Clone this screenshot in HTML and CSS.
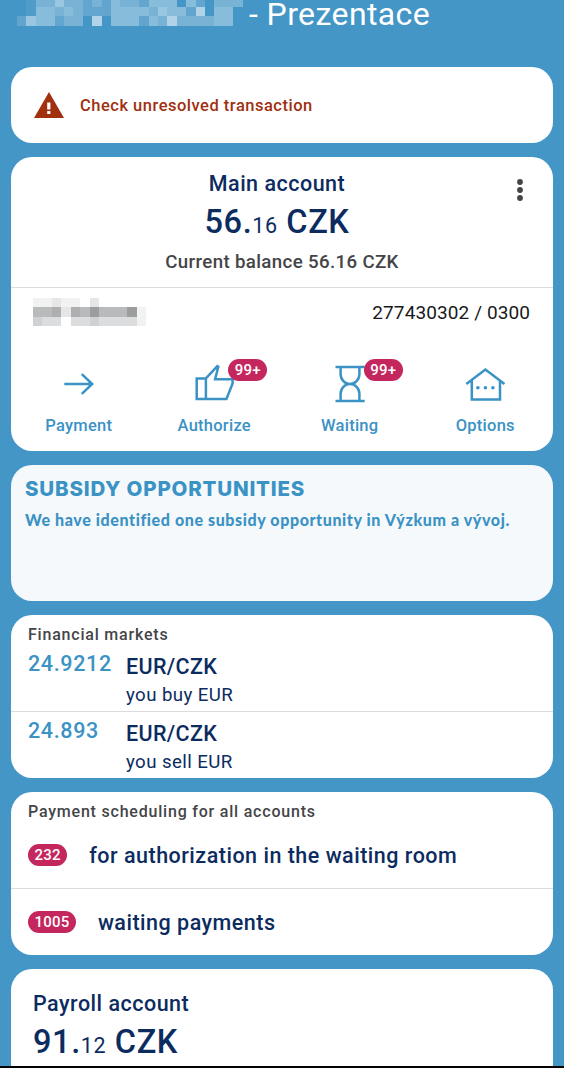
FILE: index.html
```
<!DOCTYPE html>
<html lang="en">
<head>
    <meta charset="UTF-8">
    <meta name="viewport" content="width=device-width, initial-scale=1.0">
    <title>Prezentace</title>
    <link rel="stylesheet" href="styles.css">
</head>
<body>
    <header class="header">
        <!-- masked company name -->
        <svg class="mask-name" viewBox="0 0.28 25 2.72" preserveAspectRatio="none" shape-rendering="crispEdges" fill="#fff">
            <path opacity=".06" d="M1 0h1v2h-1z"/>
            <path opacity=".16" d="M0 2h1v1h-1z M4 2h1v1h-1z M7 0h1v2h-1z M9 0h1v1h-1z M13 0h1v1h-1z M8 1h2v1h-2z M13 2h1v1h-1z M18 1h1v1h-1z M19 0h1v1h-1z"/>
            <path opacity=".28" d="M2 0h2v1h-2z M5 0h2v1h-2z M8 0h1v1h-1z M11 0h2v1h-2z M4 1h1v1h-1z M6 1h1v1h-1z M5 2h2v1h-2z M14 1h1v1h-1z M15 2h1v1h-1z M17 2h4v1h-4z M21 0h3v1h-3z"/>
            <path opacity=".36" d="M2 1h2v1h-2z M5 1h1v1h-1z M2 2h2v1h-2z M10 0h1v2h-1z M11 1h1v1h-1z M10 2h3v1h-3z M14 0h3v1h-3z M16 1h2v1h-2z M14 2h1v1h-1z M18 0h1v1h-1z M21 1h2v2h-2z M12 1h2v1h-2z"/>
            <path opacity=".46" d="M4 0h1v1h-1z M1 2h1v1h-1z M15 1h1v1h-1z"/>
            <path opacity=".58" d="M8 2h1v1h-1z M16 2h1v1h-1z M19 1h1v1h-1z"/>
        </svg>
        <h1>- Prezentace</h1>
    </header>

    <main class="cards">
        <section class="card alert">
            <svg width="30" height="26" viewBox="0 0 30 26">
                <path fill="#a03010" d="M15 0L30 26H0z"/>
                <path fill="#fff" d="M13.2 10.5h3.2v7h-3.2z M13.2 19h3.2v3h-3.2z"/>
            </svg>
            <span>Check unresolved transaction</span>
        </section>

        <section class="card main-account">
            <svg class="menu" width="8" height="24" viewBox="0 0 8 24" fill="#444548">
                <circle cx="4" cy="4" r="2.9"/>
                <circle cx="4" cy="12" r="2.9"/>
                <circle cx="4" cy="20" r="2.9"/>
            </svg>
            <div class="summary">
                <h2 class="account-name">Main account</h2>
                <div class="amount">56.<small>16</small> CZK</div>
                <div class="balance">Current balance 56.16 CZK</div>
            </div>
            <div class="account-row">
                <svg class="mask-account" viewBox="0 0 12 3" preserveAspectRatio="none" shape-rendering="crispEdges">
                    <path fill="#f2f2f3" d="M0 0h2v1h-2z M3 0h2v1h-2z M11 1h1v2h-1z"/>
                    <path fill="#e6e6e7" d="M2 0h1v1h-1z M6 0h1v1h-1z M3 1h1v1h-1z"/>
                    <path fill="#dcdddf" d="M0 2h3v1h-3z M4 2h7v1h-7z"/>
                    <path fill="#d0d1d3" d="M0 2h1v1h-1z M6 2h1v1h-1z"/>
                    <path fill="#b9babc" d="M0 1h3v1h-3z M5 1h1v1h-1z M7 1h3v1h-3z"/>
                    <path fill="#aeafb1" d="M2 1h1v1h-1z M4 1h1v1h-1z"/>
                    <path fill="#9b9d9f" d="M6 1h1v1h-1z M10 1h1v1h-1z"/>
                </svg>
                <span>277430302 / 0300</span>
            </div>
            <nav class="actions">
                <a class="action">
                    <span class="icon">
                        <svg viewBox="0 0 44 44"><path d="M7.3 22H36 M24.8 12.2L35.2 22L24.8 31.8"/></svg>
                    </span>
                    Payment
                </a>
                <a class="action">
                    <span class="icon">
                        <svg viewBox="0 0 44 44"><path d="M4.7 16.4H13.9V37.1H4.7z M13.9 16.4L25.3 4.2L26.3 4.9L23.1 17.2H40.6V21.5L34.4 37.1H13.9"/></svg>
                        <b class="badge">99+</b>
                    </span>
                    Authorize
                </a>
                <a class="action">
                    <span class="icon">
                        <svg viewBox="0 0 44 44"><path d="M7.5 5H36.7 M7.5 39H36.7 M12.6 5V12.3a9.4 9.6 0 0 0 18.8 0V5 M12.6 39V31.7a9.4 9.6 0 0 1 18.8 0V39"/></svg>
                        <b class="badge">99+</b>
                    </span>
                    Waiting
                </a>
                <a class="action">
                    <span class="icon">
                        <svg viewBox="0 0 44 44">
                            <path d="M3.3 22L22.4 7.5L41.5 22 M8.8 18V37.5H37V18"/>
                            <g class="dots"><circle cx="14.9" cy="25.7" r="1.8"/><circle cx="22.4" cy="25.7" r="1.8"/><circle cx="29.9" cy="25.7" r="1.8"/></g>
                        </svg>
                    </span>
                    Options
                </a>
            </nav>
        </section>

        <section class="card subsidy">
            <h2>SUBSIDY OPPORTUNITIES</h2>
            <p>We have identified one subsidy opportunity in Výzkum a vývoj.</p>
        </section>

        <section class="card markets">
            <h3 class="card-title">Financial markets</h3>
            <div class="rate">
                <span class="value">24.9212</span>
                <div>
                    <div class="pair">EUR/CZK</div>
                    <div class="side">you buy EUR</div>
                </div>
            </div>
            <div class="rate">
                <span class="value">24.893</span>
                <div>
                    <div class="pair">EUR/CZK</div>
                    <div class="side">you sell EUR</div>
                </div>
            </div>
        </section>

        <section class="card scheduling">
            <h3 class="card-title">Payment scheduling for all accounts</h3>
            <div class="schedule">
                <b class="badge">232</b>
                <span>for authorization in the waiting room</span>
            </div>
            <div class="schedule">
                <b class="badge">1005</b>
                <span>waiting payments</span>
            </div>
        </section>

        <section class="card payroll">
            <h2 class="account-name">Payroll account</h2>
            <div class="amount">91.<small>12</small> CZK</div>
        </section>
    </main>
    <footer class="bottom-bar"></footer>
</body>
</html>
```
FILE: styles.css
```
* {
    box-sizing: border-box;
}

body {
    font-family: Roboto, "Liberation Sans", sans-serif;
    font-weight: 500;
    background-color: #4496c7;
    margin: 0;
    height: 1068px;
    display: flex;
    flex-direction: column;
    overflow: hidden;
}

h1, h2, h3, p {
    margin: 0;
    font-weight: 500;
}

.header {
    display: flex;
    align-items: flex-start;
    flex-shrink: 0;
    height: 67px;
    padding-left: 17px;
}

.header h1 {
    color: white;
    font-size: 32px;
    font-weight: 400;
    line-height: 28px;
    letter-spacing: 0.4px;
    white-space: nowrap;
}

.mask-name {
    width: 235px;
    height: 25.6px;
    margin-right: -3px;
}

.cards {
    display: flex;
    flex-direction: column;
    gap: 14px;
    flex: 1;
    min-height: 0;
    padding: 0 11px;
}

.card {
    background-color: white;
    border-radius: 21px;
    flex-shrink: 0;
    position: relative;
}

.alert {
    display: flex;
    align-items: center;
    gap: 16px;
    height: 76px;
    padding: 0 23px;
    color: #a03010;
    font-size: 16.5px;
    letter-spacing: 0.5px;
}

.main-account {
    height: 294px;
}

.menu {
    position: absolute;
    top: 21px;
    right: 29px;
}

.summary {
    height: 131px;
    padding-top: 14px;
    text-align: center;
    border-bottom: 1px solid #dcdcdc;
}

.summary .account-name, .summary .amount {
    padding-right: 10px;
}

.account-name {
    color: #0c2c60;
    font-size: 21.5px;
    line-height: 26px;
    letter-spacing: 0.5px;
}

.amount {
    color: #0c2c60;
    font-size: 32.5px;
    line-height: 50px;
    letter-spacing: 0.6px;
}

.amount small {
    font-size: 21.5px;
    font-weight: 400;
    line-height: 1;
}

.balance {
    color: #444548;
    font-size: 18.7px;
    line-height: 31px;
    letter-spacing: 0.35px;
}

.account-row {
    display: flex;
    justify-content: space-between;
    align-items: flex-start;
    padding: 10px 23px 0 22px;
    height: 74px;
    color: #18191b;
    font-size: 19px;
    font-weight: 400;
    line-height: 30px;
    letter-spacing: 0.1px;
}

.mask-account {
    width: 113px;
    height: 28px;
}

.actions {
    display: grid;
    grid-template-columns: repeat(4, 1fr);
}

.action {
    display: flex;
    flex-direction: column;
    align-items: center;
    color: #3b92c4;
    font-size: 16.5px;
    line-height: 39px;
    letter-spacing: 0.25px;
}

.icon {
    position: relative;
    width: 44px;
    height: 44px;
}

.icon svg {
    display: block;
    fill: none;
    stroke: #3b92c4;
    stroke-width: 2.5;
}

.icon .dots {
    fill: #3b92c4;
    stroke: none;
}

.badge {
    background-color: #c4265e;
    color: white;
    border-radius: 11px;
    height: 22px;
    padding: 0 6.5px;
    font-size: 15px;
    font-weight: 500;
    line-height: 22px;
    letter-spacing: 0.2px;
}

.icon .badge {
    position: absolute;
    left: 36px;
    top: -3px;
}

.subsidy {
    background-color: #f5f9fc;
    height: 136px;
    padding: 10px 14px;
    color: #3b92c4;
    font-family: Lato, sans-serif;
}

.subsidy h2 {
    font-family: Inter, sans-serif;
    font-size: 20.5px;
    font-weight: 800;
    line-height: 28px;
    letter-spacing: 0.8px;
}

.subsidy p {
    font-size: 16px;
    font-weight: 900;
    line-height: 34px;
    letter-spacing: 0.6px;
    white-space: nowrap;
}

.markets {
    height: 163px;
    padding-top: 10px;
}

.card-title {
    padding-left: 17px;
    color: #444548;
    font-size: 16px;
    line-height: 20px;
    letter-spacing: 0.79px;
}

.rate {
    display: grid;
    grid-template-columns: 98px 1fr;
    height: 66px;
    padding: 6px 17px 0;
}

.rate + .rate {
    height: 67px;
}

.rate + .rate, .schedule + .schedule {
    border-top: 1px solid #dcdcdc;
}

.value {
    color: #3b92c4;
    font-size: 21.5px;
    line-height: 25px;
    letter-spacing: 0.65px;
}

.pair, .side, .schedule {
    color: #0c2c60;
}

.pair {
    font-size: 21.5px;
    line-height: 31px;
    letter-spacing: 0.35px;
}

.side {
    font-size: 18.7px;
    font-weight: 400;
    line-height: 26px;
    letter-spacing: 0.4px;
}

.scheduling {
    height: 163px;
    padding-top: 10px;
}

.schedule {
    display: flex;
    align-items: center;
    gap: 22px;
    height: 66px;
    padding: 0 17px;
    font-size: 21.5px;
    letter-spacing: 0.5px;
}

.schedule + .schedule {
    height: 67px;
}

.payroll {
    height: 140px;
    padding: 22px;
}

.bottom-bar {
    background-color: black;
    height: 2px;
    flex-shrink: 0;
    position: relative;
}
```
